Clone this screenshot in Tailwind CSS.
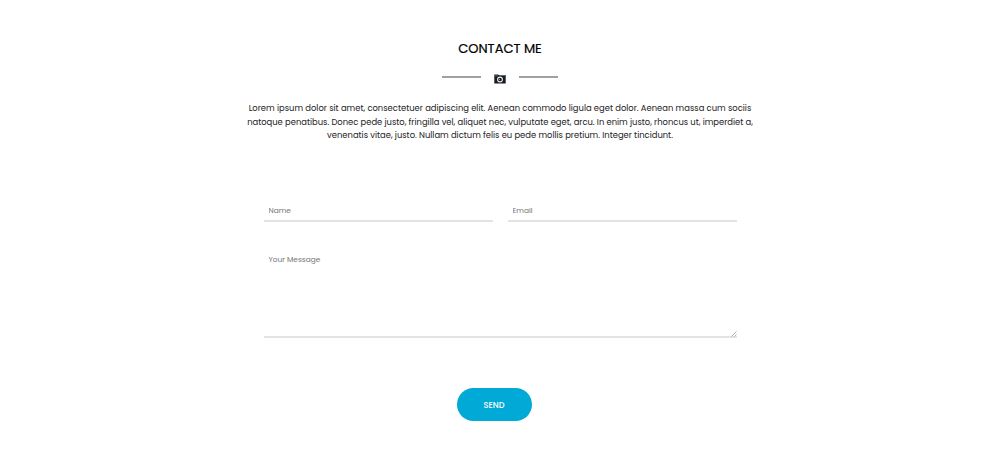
<!DOCTYPE html>
<html lang="en">
<head>
<meta charset="utf-8">
<title>Contact Me</title>
<script src="https://cdn.jsdelivr.net/npm/@tailwindcss/browser@4"></script>
</head>
<body class="bg-white font-['Poppins',Inter,sans-serif] text-black">
<main class="mx-auto flex h-[450px] w-[520px] flex-col items-center">
  <h1 class="mt-[39px] h-5 text-[13px] leading-5 font-normal whitespace-nowrap [-webkit-text-stroke:0.2px_black]">CONTACT ME</h1>
  <div class="mt-[12px] flex h-[14px] w-[116px] items-center justify-between">
    <span class="mb-[2px] h-[2px] w-[39px] bg-[#a0a0a0]"></span>
    <svg class="mt-[2px] h-[10px] w-3" viewBox="0 0 12 10">
      <path d="M0.3 0.5h4v.5h7.4v8.5H0.3z" fill="#171c24"/>
      <path d="M0.8 1.8h3M5.3 1.5h6" stroke="#77777c" stroke-width=".8"/>
      <circle cx="6" cy="5.5" r="2.4" fill="#171c24" stroke="#eee" stroke-width="1.1"/>
      <path d="M5 5l1 1" stroke="#ccc" stroke-width=".8"/>
    </svg>
    <span class="mb-[2px] h-[2px] w-[39px] bg-[#a0a0a0]"></span>
  </div>
  <p class="mt-[17px] h-[41px] text-center text-[8.4px] leading-[13.5px] whitespace-nowrap text-[#222]">
    <span class="block tracking-[0.01px]">Lorem ipsum dolor sit amet, consectetuer adipiscing elit. Aenean commodo ligula eget dolor. Aenean massa cum sociis</span>
    <span class="block">natoque penatibus. Donec pede justo, fringilla vel, aliquet nec, vulputate eget, arcu. In enim justo, rhoncus ut, imperdiet a,</span>
    <span class="block">venenatis vitae, justo. Nullam dictum felis eu pede mollis pretium. Integer tincidunt.</span>
  </p>
  <form class="mt-[57px] flex w-[473px] flex-col text-[7.4px]">
    <div class="flex gap-[15px]">
      <input class="h-[22px] w-[229px] border-b-2 border-[#e3e3e3] px-[5px] pt-[1px] placeholder:text-[#757575]" placeholder="Name" aria-label="Name">
      <input class="h-[22px] w-[229px] border-b-2 border-[#e3e3e3] px-[5px] pt-[1px] placeholder:text-[#757575]" placeholder="Email" aria-label="Email">
    </div>
    <div class="relative mt-[31px] h-[85px]">
      <textarea class="block h-full w-full resize-none border-b-2 border-[#e3e3e3] px-[5px] pt-[1px] leading-[11px] placeholder:text-[#757575]" placeholder="Your Message" aria-label="Your Message"></textarea>
      <svg class="absolute right-0 bottom-[1px] h-[6px] w-[6px]" viewBox="0 0 6 6"><path d="M0.5 5.5l5-5M3.5 5.5l2-2" stroke="#999" stroke-width=".8"/></svg>
    </div>
    <button type="button" class="mt-[50px] ml-[193px] h-[33px] w-[75px] rounded-full bg-[#00a9d6] pt-[1px] text-[8.2px] font-medium text-white">SEND</button>
  </form>
</main>
</body>
</html>
